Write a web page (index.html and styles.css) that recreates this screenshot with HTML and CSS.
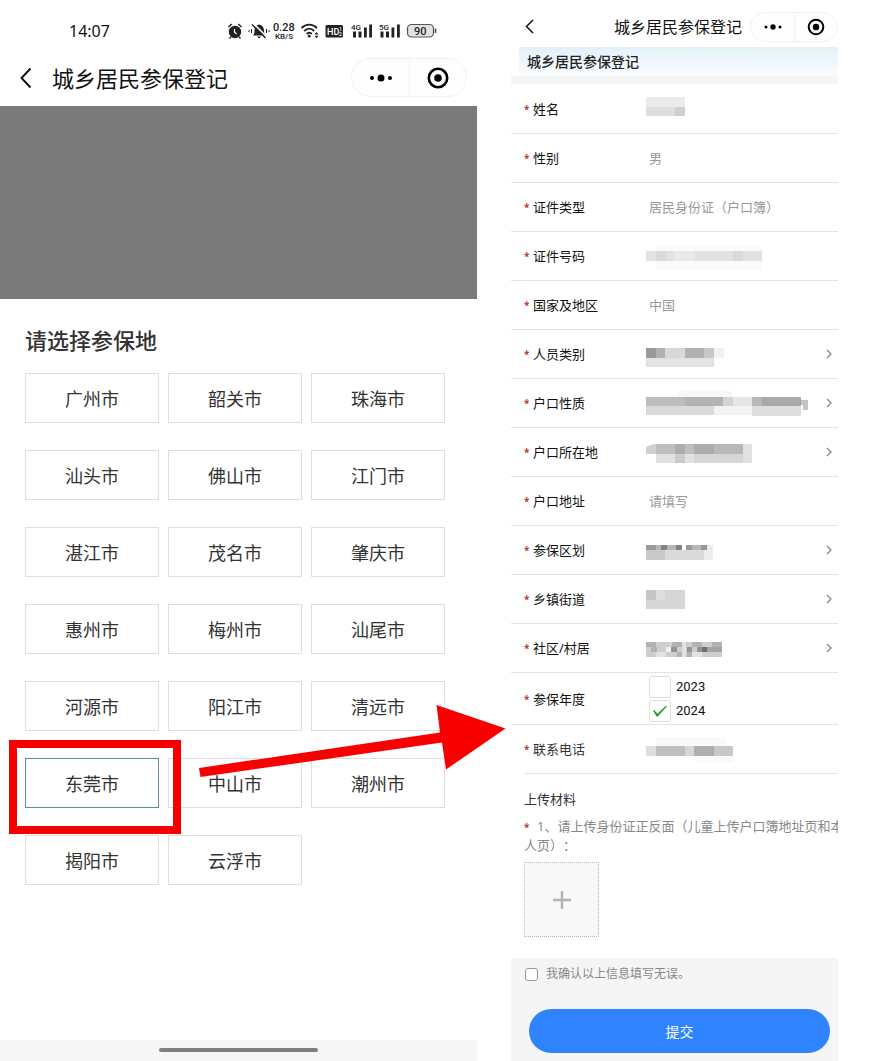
FILE: index.html
```html
<!DOCTYPE html>
<html lang="zh-CN">
<head>
<meta charset="utf-8">
<meta name="viewport" content="width=device-width, initial-scale=1">
<title>城乡居民参保登记</title>
<link rel="stylesheet" href="styles.css">
</head>
<body>
<main class="page">
  <section class="phone">
    <div class="status">
      <span class="clock">14:07</span>
      <svg class="status-icons" width="214" height="22" viewBox="226 20 214 22" aria-hidden="true">
        <g fill="#222">
          <circle cx="235" cy="32" r="6.2"/>
          <path d="M228.500 27l3.200-3M241.500 27l-3.200-3" stroke="#222" stroke-width="1.500" fill="none"/>
          <path d="M231 37l-1.500 1.500M239 37l1.500 1.500" stroke="#222" stroke-width="1.500" fill="none"/>
          <path d="M234.500 29v3l2 2" stroke="#fff" stroke-width="1.200" fill="none"/>
          <path d="M253 35.500c1.500-1.500 1.500-3 1.500-5 0-3 1.500-5.500 4.500-6 3 .5 5 3 5 6 0 2 .3 3.500 1.500 5zM257 36.500h4l-2 2z"/>
          <path d="M253.500 23.500l13.500 13.500" stroke="#fff" stroke-width="1.600"/>
          <path d="M252 24.500l13.500 13.500" stroke="#222" stroke-width="1.500"/>
          <path d="M249 30v2M251.500 29v4M266.500 29v4M269 30v2" stroke="#222" stroke-width="1"/>
          <path d="M301.500 28c4.500-4.500 11-4.500 15.500 0M304.200 31c3-3 7-3 10 0M306.800 34c1.700-1.600 3.700-1.600 5 0" stroke="#222" stroke-width="1.900" fill="none"/>
          <circle cx="309.200" cy="36.200" r="1.400"/>
          <path d="M314.500 34.500l2-2.500 2 2.500zM314.500 35.800l2 2.500 2-2.500z"/>
          <rect x="325.500" y="25" width="17.500" height="12.500" rx="1.500"/>
          <path d="M353 31.500h3v6h-3zM358.500 31.500h3v6h-3zM364 27.500h2.800v10H364zM369.200 24.500h2.800v13h-2.800z"/>
          <path d="M380.500 31.500h3v6h-3zM386 31.500h3v6h-3zM391.500 27.500h2.800v10h-2.800zM397 24.500h2.800v13H397z"/>
        </g>
        <rect x="407.500" y="24.500" width="26" height="12.500" rx="4" fill="#e2e2e2" stroke="#555" stroke-width="1.200"/>
        <path d="M435.500 28.500v4.500" stroke="#555" stroke-width="1.600"/>
        <g class="icon-text">
          <text x="273" y="31" font-size="11">0.28</text>
          <text x="275" y="39" font-size="8">KB/S</text>
          <text class="inverse" x="327" y="34.500" font-size="9">HD</text>
          <text class="inverse" x="339" y="31" font-size="5">1</text>
          <text class="inverse" x="339" y="36" font-size="5">2</text>
          <text x="351" y="30" font-size="8">4G</text>
          <text x="379" y="30" font-size="8">5G</text>
          <text x="414" y="34.500" font-size="11">90</text>
        </g>
      </svg>
    </div>
    <header class="nav">
      <button class="back" type="button" aria-label="返回">
        <svg width="12" height="22" viewBox="0 0 12 22"><path d="M10.500 1.500L1.500 11l9 9.500" fill="none" stroke="#111" stroke-width="1.900"/></svg>
      </button>
      <h1 class="nav-title">城乡居民参保登记</h1>
      <div class="capsule">
        <button type="button" aria-label="更多"><svg width="24" height="10" viewBox="0 0 24 10"><circle cx="3" cy="5" r="2"/><circle cx="12" cy="5" r="3.500"/><circle cx="21" cy="5" r="2"/></svg></button>
        <button type="button" aria-label="关闭"><svg width="22" height="22" viewBox="0 0 22 22"><circle cx="11" cy="11" r="9.200" fill="none" stroke="#000" stroke-width="2.600"/><circle cx="11" cy="11" r="3.800"/></svg></button>
      </div>
    </header>
    <div class="banner"></div>
    <div class="picker">
      <h2 class="picker-title">请选择参保地</h2>
      <div class="cities">
        <button class="city" type="button">广州市</button>
        <button class="city" type="button">韶关市</button>
        <button class="city" type="button">珠海市</button>
        <button class="city" type="button">汕头市</button>
        <button class="city" type="button">佛山市</button>
        <button class="city" type="button">江门市</button>
        <button class="city" type="button">湛江市</button>
        <button class="city" type="button">茂名市</button>
        <button class="city" type="button">肇庆市</button>
        <button class="city" type="button">惠州市</button>
        <button class="city" type="button">梅州市</button>
        <button class="city" type="button">汕尾市</button>
        <button class="city" type="button">河源市</button>
        <button class="city" type="button">阳江市</button>
        <button class="city" type="button">清远市</button>
        <button class="city city-selected" type="button">东莞市</button>
        <button class="city" type="button">中山市</button>
        <button class="city" type="button">潮州市</button>
        <button class="city" type="button">揭阳市</button>
        <button class="city" type="button">云浮市</button>
      </div>
    </div>
    <div class="home"><span class="home-bar"></span></div>
  </section>

  <form class="form">
    <header class="nav nav-small">
      <button class="back" type="button" aria-label="返回">
        <svg width="9" height="15" viewBox="0 0 9 15"><path d="M8 1L1.500 7.500 8 14" fill="none" stroke="#111" stroke-width="1.500"/></svg>
      </button>
      <h1 class="nav-title">城乡居民参保登记</h1>
      <div class="capsule">
        <button type="button" aria-label="更多"><svg width="18" height="8" viewBox="0 0 18 8"><circle cx="2" cy="4" r="1.500"/><circle cx="9" cy="4" r="2.700"/><circle cx="16" cy="4" r="1.500"/></svg></button>
        <button type="button" aria-label="关闭"><svg width="18" height="18" viewBox="0 0 18 18"><circle cx="9" cy="9" r="7.300" fill="none" stroke="#000" stroke-width="2"/><circle cx="9" cy="9" r="3.200"/></svg></button>
      </div>
    </header>
    <h2 class="section">城乡居民参保登记</h2>
    <div class="strip"></div>

    <div class="row row-first">
      <span class="label">姓名</span>
      <svg class="mosaic" viewBox="0 0 170 32"><path fill="#ebebeb" d="M0 4h39v10H0z"/><path fill="#dedede" d="M0 14h29v9H0z"/><path fill="#cfcfcf" d="M29 14h10v9H29z"/></svg>
    </div>
    <div class="row">
      <label class="label" for="sex">性别</label>
      <input class="value" id="sex" value="男" readonly>
    </div>
    <div class="row">
      <label class="label" for="idtype">证件类型</label>
      <input class="value" id="idtype" value="居民身份证（户口簿）" readonly>
    </div>
    <div class="row">
      <span class="label">证件号码</span>
      <svg class="mosaic" viewBox="0 0 170 32"><path fill="#fafafa" d="M10 6h106v5H10zM10 21h106v8H10z"/><path fill="#e2e2e2" d="M0 11h116v10H0z"/><path fill="#dadada" d="M10 11h10v10H10zM87 11h10v10H87z"/><path fill="#e9e9e9" d="M29 11h20v10H29z"/></svg>
    </div>
    <div class="row">
      <label class="label" for="country">国家及地区</label>
      <input class="value" id="country" value="中国" readonly>
    </div>
    <div class="row">
      <span class="label">人员类别</span>
      <button class="pick" type="button" aria-label="人员类别">
        <svg class="mosaic" viewBox="0 0 170 32"><path fill="#e3e3e3" d="M0 20h68v9H0z"/><path fill="#999" d="M0 10h10v10H0z"/><path fill="#b1b1b1" d="M10 10h9v10h-9zM39 10h19v10H39z"/><path fill="#d8d8d8" d="M19 10h20v10H19z"/><path fill="#c8c8c8" d="M58 10h10v10H58z"/><path fill="#f1f1f1" d="M68 10h10v10H68z"/></svg>
        <svg class="chevron" viewBox="0 0 6 10"><path d="M1 1l4 4-4 4"/></svg>
      </button>
    </div>
    <div class="row">
      <span class="label">户口性质</span>
      <button class="pick" type="button" aria-label="户口性质">
        <svg class="mosaic" viewBox="0 0 170 32"><path fill="#f8f8f8" d="M32 4h54v6H32z"/><path fill="#f3f3f3" d="M68 19h38v9H68z"/><path fill="#dadada" d="M0 19h68v9H0z"/><path fill="#bdbdbd" d="M0 10h39v9H0z"/><path fill="#b3b3b3" d="M39 10h38v9H39z"/><path fill="#d3d3d3" d="M77 10h10v9H77z"/><path fill="#e6e6e6" d="M87 10h19v9H87z"/><path fill="#b8b8b8" d="M106 10h10v9h-10z"/><path fill="#a9a9a9" d="M116 10h39v9h-39z"/><path fill="#dedede" d="M106 19h49v10h-49z"/><path fill="#c4c4c4" d="M155 13h7v10h-5v-5h-2z"/></svg>
        <svg class="chevron" viewBox="0 0 6 10"><path d="M1 1l4 4-4 4"/></svg>
      </button>
    </div>
    <div class="row">
      <span class="label">户口所在地</span>
      <button class="pick" type="button" aria-label="户口所在地">
        <svg class="mosaic" viewBox="0 0 170 32"><path fill="#cfcfcf" d="M0 11l8-3h2v10H0z"/><path fill="#bebebe" d="M10 8h19v10H10zM39 8h9v10h-9z"/><path fill="#adadad" d="M29 8h10v10H29zM48 8h20v10H48z"/><path fill="#b8b8b8" d="M68 8h29v10H68z"/><path fill="#e1e1e1" d="M97 8h9v19h-9zM10 18h19v9H10zM39 18h9v9h-9z"/><path fill="#cbcbcb" d="M29 18h10v9H29z"/><path fill="#d6d6d6" d="M48 18h49v9H48z"/></svg>
        <svg class="chevron" viewBox="0 0 6 10"><path d="M1 1l4 4-4 4"/></svg>
      </button>
    </div>
    <div class="row">
      <label class="label" for="address">户口地址</label>
      <input class="value" id="address" placeholder="请填写">
    </div>
    <div class="row">
      <span class="label">参保区划</span>
      <button class="pick" type="button" aria-label="参保区划">
        <svg class="mosaic" viewBox="0 0 170 32"><path fill="#c9c9c9" d="M0 16h19v10H0z"/><path fill="#dadada" d="M19 16h39v10H19z"/><path fill="#ececec" d="M58 11h9v15h-9z"/><path fill="#9b9b9b" d="M0 11h10v5H0zM40 11h6v5h-6z"/><path fill="#b7b7b7" d="M10 11h5v5h-5zM21 11h9v5h-9zM46 11h9v5h-9z"/><path fill="#838383" d="M15 11h6v5h-6zM30 11h6v5h-6z"/><path fill="#969696" d="M55 11h6v5h-6z"/></svg>
        <svg class="chevron" viewBox="0 0 6 10"><path d="M1 1l4 4-4 4"/></svg>
      </button>
    </div>
    <div class="row">
      <span class="label">乡镇街道</span>
      <button class="pick" type="button" aria-label="乡镇街道">
        <svg class="mosaic" viewBox="0 0 170 32"><path fill="#d6d6d6" d="M0 7h39v19H0z"/><path fill="#c6c6c6" d="M0 7h10v10H0z"/><path fill="#dedede" d="M10 7h9v10h-9z"/></svg>
        <svg class="chevron" viewBox="0 0 6 10"><path d="M1 1l4 4-4 4"/></svg>
      </button>
    </div>
    <div class="row">
      <span class="label">社区/村居</span>
      <button class="pick" type="button" aria-label="社区/村居">
        <svg class="mosaic" viewBox="0 0 170 32"><path fill="#cecece" d="M0 10h76v15H0z"/><path fill="#b2b2b2" d="M0 10h10v5H0zM5 15h6v5H5zM26 10h10v5H26zM46 10h10v5H46zM66 10h10v5H66zM31 20h5v5h-5zM41 20h5v5h-5z"/><path fill="#949494" d="M25 15h6v5h-6zM41 15h5v5h-5zM51 15h5v5h-5z"/><path fill="#6f6f6f" d="M56 15h5v5h-5z"/><path fill="#a4a4a4" d="M61 15h15v5H61z"/><path fill="#f0f0f0" d="M20 15h5v5h-5z"/><path fill="#e2e2e2" d="M36 10h4v15h-4zM10 20h10v5H10zM46 20h10v5H46z"/></svg>
        <svg class="chevron" viewBox="0 0 6 10"><path d="M1 1l4 4-4 4"/></svg>
      </button>
    </div>
    <div class="row row-years">
      <span class="label">参保年度</span>
      <div class="years">
        <label class="year"><input class="tick" type="checkbox">2023</label>
        <label class="year"><input class="tick" type="checkbox" checked>2024</label>
      </div>
    </div>
    <div class="row row-last">
      <span class="label">联系电话</span>
      <svg class="mosaic" viewBox="0 0 170 32"><path fill="#f9f9f9" d="M10 4h70v9H10zM48 23h39v6H48z"/><path fill="#dedede" d="M0 13h10v10H0z"/><path fill="#bfbfbf" d="M10 13h29v10H10z"/><path fill="#d6d6d6" d="M39 13h9v10h-9z"/><path fill="#aeaeae" d="M48 13h20v10H48z"/><path fill="#c8c8c8" d="M68 13h19v10H68z"/></svg>
    </div>

    <div class="upload">
      <h3 class="upload-title">上传材料</h3>
      <p class="upload-note"><span class="star">*</span>1、请上传身份证正反面（儿童上传户口簿地址页和本<br>人页）：</p>
      <button class="upload-box" type="button" aria-label="添加图片">
        <svg width="18" height="18" viewBox="0 0 18 18"><path d="M9 0v18M0 9h18" stroke="#b3b3b3" stroke-width="2.400"/></svg>
      </button>
    </div>

    <footer class="footer">
      <label class="confirm"><input class="agree" type="checkbox">我确认以上信息填写无误。</label>
      <button class="submit" type="button">提交</button>
    </footer>
  </form>

  <svg class="arrow" width="883" height="1061" viewBox="0 0 883 1061" aria-hidden="true">
    <path fill="#f90000" d="M199 768L440 732.500 436.500 705 505.500 728.500 446 769.500 442 742.500 200.500 777z"/>
  </svg>
</main>
</body>
</html>
```
FILE: styles.css
```css
* {
  box-sizing: border-box;
}

body {
  margin: 0;
  background: #fff;
  color: #111;
  font-family: "Noto Sans", "Noto Sans CJK SC", sans-serif;
  text-spacing-trim: space-all;
}

h1, h2, h3, p {
  margin: 0;
}

button, input {
  margin: 0;
  padding: 0;
  border: 0;
  background: none;
  color: inherit;
  font-family: inherit;
}

svg {
  display: block;
  flex: none;
}

.page {
  position: relative;
  display: grid;
  grid-template-columns: 477fr 327fr;
  column-gap: 34px;
  min-height: 100vh;
  padding-right: 45px;
  overflow: hidden;
}

.phone, .form {
  display: flex;
  flex-direction: column;
  min-width: 0;
}

.status {
  display: flex;
  align-items: center;
  justify-content: space-between;
  height: 49px;
  padding: 12px 37px 0 69px;
}

.clock {
  font-size: 16px;
}

.icon-text {
  font-family: Roboto, sans-serif;
  font-weight: 500;
  fill: #222;
}

.inverse {
  fill: #fff;
}

.nav {
  display: flex;
  align-items: center;
  height: 57px;
  padding: 0 10px 0 20px;
}

.nav-title {
  margin-left: 20px;
  font-size: 22px;
  line-height: 32px;
  font-weight: 400;
  white-space: nowrap;
}

.capsule {
  display: grid;
  grid-template-columns: 1fr 1fr;
  width: 116px;
  height: 39px;
  margin-left: auto;
  border: 1px solid #f1f1f1;
  border-radius: 20px;
  background: #fefefe;
}

.capsule button {
  display: flex;
  align-items: center;
  justify-content: center;
}

.capsule button + button {
  border-left: 1px solid #f3f3f3;
}

.banner {
  height: 193px;
  background: #7a7a7a;
}

.picker {
  padding: 25px 32px 24px 25px;
}

.picker-title {
  margin-bottom: 17px;
  color: #333;
  font-size: 22px;
  line-height: 32px;
  font-weight: 500;
}

.cities {
  display: grid;
  grid-template-columns: repeat(3, 1fr);
  gap: 27px 9px;
}

.city {
  position: relative;
  height: 50px;
  border: 1px solid #dedede;
  background: #fff;
  color: #333;
  font-size: 18px;
}

.city-selected {
  z-index: 1;
  border-color: #5a8f9f;
}

.city-selected::after {
  content: "";
  position: absolute;
  inset: -19px -23px -27px -17px;
  border: 8px solid #f90000;
}

.home {
  display: flex;
  justify-content: center;
  height: 21px;
  margin-top: auto;
  padding-top: 8px;
  background: #f6f6f6;
}

.home-bar {
  width: 159px;
  height: 4px;
  border-radius: 2px;
  background: #808080;
}

.nav-small {
  height: 47px;
  padding: 6px 0 0 14px;
}

.nav-small .nav-title {
  margin-left: auto;
  font-size: 16px;
  line-height: 24px;
}

.nav-small .capsule {
  width: 88px;
  height: 30px;
  margin-left: 8px;
}

.section {
  margin-left: 8px;
  padding-left: 8px;
  background: linear-gradient(#e3f0f8, #fafdfe);
  color: #222;
  font-size: 14px;
  line-height: 29px;
  font-weight: 500;
}

.strip {
  height: 8px;
  background: #f6f6f6;
}

.row {
  display: grid;
  grid-template-columns: 135px 1fr;
  align-items: center;
  height: 49px;
  border-bottom: 1px solid #e3e3e3;
}

.row-first {
  height: 50px;
}

.row-years {
  height: 52px;
}

.row-last {
  grid-template-columns: 122px 1fr;
  margin-left: 13px;
}

.label {
  display: flex;
  align-items: center;
  padding-left: 13px;
  font-size: 13px;
  line-height: 20px;
}

.row-last .label {
  padding-left: 0;
  color: #333;
}

.label::before {
  content: "*";
  width: 9px;
  color: #b8383c;
  font-size: 10px;
  font-weight: 700;
}

.value {
  width: 100%;
  padding-left: 3px;
  color: #999;
  font-size: 13px;
  line-height: 20px;
}

.value::placeholder {
  color: #999;
}

.pick {
  display: flex;
  align-items: center;
  justify-content: space-between;
  padding-right: 6px;
}

.mosaic {
  width: 170px;
  height: 32px;
}

.chevron {
  width: 6px;
  height: 10px;
  fill: none;
  stroke: #888;
  stroke-width: 1.300;
}

.years {
  display: grid;
  gap: 2px;
  padding-left: 3px;
}

.year {
  display: flex;
  align-items: center;
  gap: 5px;
  font-family: Roboto, sans-serif;
  font-size: 13px;
  line-height: 20px;
}

.tick {
  appearance: none;
  width: 22px;
  height: 22px;
  border: 1px solid #ddd;
  border-radius: 3px;
  background: #fff;
}

.tick:checked::before {
  content: "";
  display: block;
  width: 14px;
  height: 11px;
  margin: 5px 3px;
  background: #1f9d22;
  clip-path: polygon(0 45%, 8% 40%, 32% 76%, 94% 0, 100% 6%, 34% 100%, 26% 100%);
}

.upload {
  padding: 15px 0 20px 13px;
  overflow: hidden;
  font-size: 13px;
}

.upload-title {
  color: #333;
  font-size: 13px;
  line-height: 20px;
  font-weight: 400;
}

.upload-note {
  margin: 8px 0;
  color: #888;
  line-height: 18px;
  white-space: nowrap;
}

.star {
  display: inline-block;
  width: 13px;
  color: #b8383c;
  font-size: 10px;
  font-weight: 700;
}

.upload-box {
  display: flex;
  align-items: center;
  justify-content: center;
  width: 75px;
  height: 75px;
  border: 1px dotted #b8b8b8;
  background: #f8f8f8;
}

.footer {
  margin-top: auto;
  padding: 7px 8px 8px 14px;
  background: #f5f5f5;
}

.confirm {
  display: flex;
  align-items: center;
  gap: 8px;
  color: #888;
  font-size: 12px;
  line-height: 18px;
}

.agree {
  appearance: none;
  width: 13px;
  height: 13px;
  border: 1px solid #999;
  border-radius: 3px;
  background: #fff;
}

.submit {
  display: block;
  width: calc(100% - 4px);
  height: 44px;
  margin: 26px 0 0 4px;
  border-radius: 22px;
  background: #3083ff;
  color: #fff;
  font-size: 14px;
}

.arrow {
  position: absolute;
  top: 0;
  left: 0;
  z-index: 2;
  pointer-events: none;
}
```
